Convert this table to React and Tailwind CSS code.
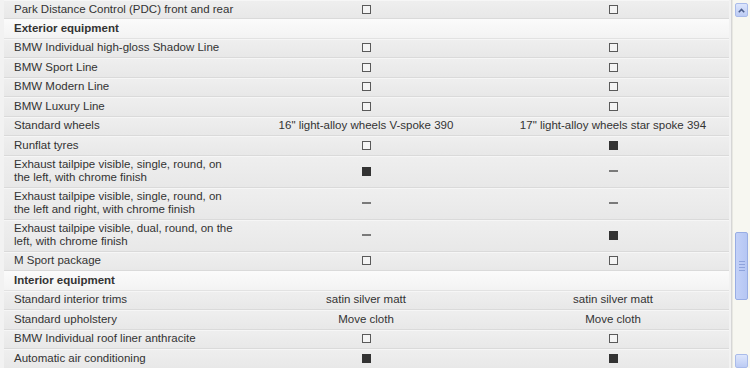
import React from 'react';

const rows = [
    { label: 'Park Distance Control (PDC) front and rear', a: 'empty', b: 'empty' },
    { label: 'Exterior equipment', header: true },
    { label: 'BMW Individual high-gloss Shadow Line', a: 'empty', b: 'empty' },
    { label: 'BMW Sport Line', a: 'empty', b: 'empty' },
    { label: 'BMW Modern Line', a: 'empty', b: 'empty' },
    { label: 'BMW Luxury Line', a: 'empty', b: 'empty' },
    { label: 'Standard wheels', a: '16" light-alloy wheels V-spoke 390', b: '17" light-alloy wheels star spoke 394' },
    { label: 'Runflat tyres', a: 'empty', b: 'full' },
    { label: 'Exhaust tailpipe visible, single, round, on the left, with chrome finish', a: 'full', b: 'dash', tall: true },
    { label: 'Exhaust tailpipe visible, single, round, on the left and right, with chrome finish', a: 'dash', b: 'dash', tall: true },
    { label: 'Exhaust tailpipe visible, dual, round, on the left, with chrome finish', a: 'dash', b: 'full', tall: true },
    { label: 'M Sport package', a: 'empty', b: 'empty' },
    { label: 'Interior equipment', header: true },
    { label: 'Standard interior trims', a: 'satin silver matt', b: 'satin silver matt' },
    { label: 'Standard upholstery', a: 'Move cloth', b: 'Move cloth' },
    { label: 'BMW Individual roof liner anthracite', a: 'empty', b: 'empty' },
    { label: 'Automatic air conditioning', a: 'full', b: 'full' },
];

function Cell({ value }) {
    if (value === 'empty') return <span className="block w-[9px] h-[9px] border-[1.5px] border-[#5a5a5a] bg-[#f4f4f4]" />;
    if (value === 'full') return <span className="block w-[9px] h-[9px] bg-[#333333]" />;
    if (value === 'dash') return <span className="block w-[9px] h-[1.5px] bg-[#7a7a7a]" />;
    return <span>{value}</span>;
}

function Row({ row, first }) {
    const height = row.tall ? 'h-[32px]' : first ? 'h-[19px]' : 'h-[19.5px]';
    if (row.header) {
        return (
            <div className={`${height} flex items-center pl-[10px] font-bold bg-gradient-to-b from-[#fbfbfb] to-[#f3f3f3] border-b border-[#e2e2e2]`}>
                {row.label}
            </div>
        );
    }
    return (
        <div className={`${height} grid grid-cols-[238px_248px_1fr] items-center bg-gradient-to-b from-[#efefef] to-[#e8e8e8] border-b border-[#dadada] shadow-[inset_0_1px_0_#f6f6f6]`}>
            <div className="pl-[10px] w-[232px] leading-[13px]">{row.label}</div>
            <div className="flex justify-center">
                <Cell value={row.a} />
            </div>
            <div className="flex justify-center pl-[7px]">
                <Cell value={row.b} />
            </div>
        </div>
    );
}

function Scrollbar() {
    return (
        <div className="w-[18px] h-full bg-[#f7f7f1] border-l border-[#e8e8e2] flex flex-col items-center pt-[3px]">
            <div className="w-[13px] h-[14px] rounded-[2px] bg-gradient-to-b from-[#dde6fc] to-[#bccbf4] border border-[#a9bbea] flex items-center justify-center">
                <svg width="7" height="5" viewBox="0 0 7 5">
                    <path d="M0.8 4.2 L3.5 1.4 L6.2 4.2" fill="none" stroke="#4d5f8c" strokeWidth="1.6" />
                </svg>
            </div>
            <div className="mt-[215px] w-[13px] h-[68px] rounded-[2px] bg-gradient-to-r from-[#c3d1f8] to-[#b5c6f3] border border-[#98ade4] flex flex-col items-center justify-center gap-[2px]">
                <span className="block w-[6px] h-px bg-[#8ea3dc]" />
                <span className="block w-[6px] h-px bg-[#8ea3dc]" />
                <span className="block w-[6px] h-px bg-[#8ea3dc]" />
                <span className="block w-[6px] h-px bg-[#8ea3dc]" />
            </div>
            <div className="mt-[54px] w-[13px] h-[14px] rounded-[2px] bg-gradient-to-b from-[#dde6fc] to-[#bccbf4] border border-[#a9bbea]" />
        </div>
    );
}

export default function App() {
    return (
        <div className="w-[750px] h-[368px] overflow-hidden flex bg-[#f2f2f2] text-[11.5px] text-[#333333] font-['Liberation_Sans',Arial,sans-serif]">
            <div className="w-[732px] pl-[4px] pr-[2px] border-r border-[#d6d6d6]">
                {rows.map((row, i) => (
                    <Row key={i} row={row} first={i === 0} />
                ))}
            </div>
            <Scrollbar />
        </div>
    );
}
